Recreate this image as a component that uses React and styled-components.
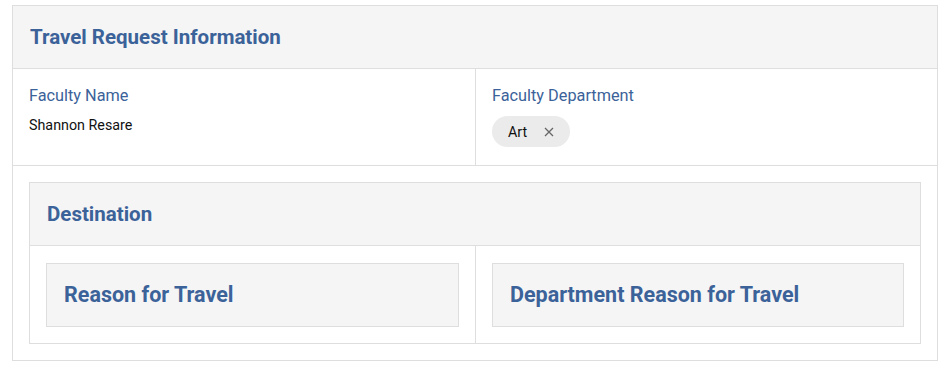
import styled, { createGlobalStyle } from "styled-components";

const GlobalStyle = createGlobalStyle`
  body {
    margin: 0;
    background: #ffffff;
    font-family: Roboto, "Liberation Sans", sans-serif;
  }
  * { box-sizing: border-box; }
`;

const BLUE = "#3b6299";
const LINE = "#dedede";

export default function App() {
  return (
    <>
      <GlobalStyle />
      <Card>
        <Header>
          <Title>Travel Request Information</Title>
        </Header>
        <Fields>
          <Field>
            <Label>Faculty Name</Label>
            <Value>Shannon Resare</Value>
          </Field>
          <Field>
            <Label>Faculty Department</Label>
            <Chip>
              <span>Art</span>
              <CloseIcon width={10} height={10} viewBox="0 0 10 10">
                <path d="M1 1L9 9M9 1L1 9" stroke="#666" strokeWidth="1.3" />
              </CloseIcon>
            </Chip>
          </Field>
        </Fields>
        <Body>
          <Section>
            <Header>
              <Title>Destination</Title>
            </Header>
            <Columns>
              <Column>
                <SubCard>
                  <SubTitle>Reason for Travel</SubTitle>
                </SubCard>
              </Column>
              <Column>
                <SubCard>
                  <SubTitle>Department Reason for Travel</SubTitle>
                </SubCard>
              </Column>
            </Columns>
          </Section>
        </Body>
      </Card>
    </>
  );
}

const Card = styled.div`
  margin: 5px 0 0 12px;
  width: 926px;
  border: 1px solid ${LINE};
  background: #fff;
`;

const Header = styled.header`
  height: 63px;
  display: flex;
  align-items: center;
  padding: 0 16px 1px 17px;
  background: #f5f5f5;
  border-bottom: 1px solid ${LINE};
`;

const Title = styled.h2`
  margin: 0;
  font-size: 20.5px;
  font-weight: 700;
  color: ${BLUE};
`;

const Fields = styled.div`
  display: grid;
  grid-template-columns: 1fr 1fr;
  border-bottom: 1px solid ${LINE};

  & > div + div {
    border-left: 1px solid ${LINE};
  }
`;

const Field = styled.div`
  height: 96px;
  padding: 16px 16px 0 16px;
`;

const Label = styled.div`
  font-size: 16.3px;
  line-height: 21px;
  color: ${BLUE};
`;

const Value = styled.div`
  margin-top: 10px;
  font-size: 14.3px;
  line-height: 18px;
  color: #111;
`;

const Chip = styled.div`
  margin-top: 10px;
  display: inline-flex;
  align-items: center;
  gap: 17px;
  height: 31px;
  padding: 0 16px 0 16px;
  border-radius: 16px;
  background: #ebebeb;
  font-size: 14.3px;
  color: #111;
`;

const CloseIcon = styled.svg`
  display: block;
`;

const Body = styled.div`
  padding: 16px;
`;

const Section = styled.div`
  border: 1px solid ${LINE};
`;

const Columns = styled.div`
  display: grid;
  grid-template-columns: 1fr 1fr;

  & > div + div {
    border-left: 1px solid ${LINE};
  }
`;

const Column = styled.div`
  padding: 17px 16px 16px;
`;

const SubCard = styled.div`
  height: 64px;
  display: flex;
  align-items: center;
  padding: 0 16px 1px 17px;
  background: #f5f5f5;
  border: 1px solid ${LINE};
`;

const SubTitle = styled.h3`
  margin: 0;
  font-size: 21.5px;
  font-weight: 700;
  color: ${BLUE};
`;
